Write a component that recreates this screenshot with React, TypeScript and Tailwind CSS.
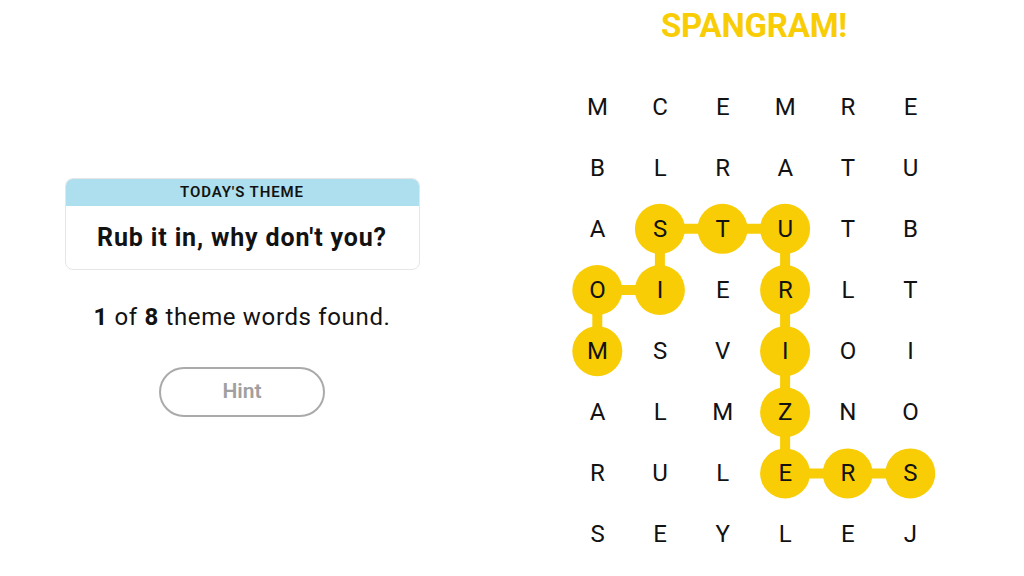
import React from 'react';

const letters = [
  ['M', 'C', 'E', 'M', 'R', 'E'],
  ['B', 'L', 'R', 'A', 'T', 'U'],
  ['A', 'S', 'T', 'U', 'T', 'B'],
  ['O', 'I', 'E', 'R', 'L', 'T'],
  ['M', 'S', 'V', 'I', 'O', 'I'],
  ['A', 'L', 'M', 'Z', 'N', 'O'],
  ['R', 'U', 'L', 'E', 'R', 'S'],
  ['S', 'E', 'Y', 'L', 'E', 'J'],
];

// spangram path as [row, col]
const path: [number, number][] = [
  [4, 0], [3, 0], [3, 1], [2, 1], [2, 2], [2, 3],
  [3, 3], [4, 3], [5, 3], [6, 3], [6, 4], [6, 5],
];

const CW = 62.6;
const RH = 61.14;
const YELLOW = '#f8cd05';

const cx = (c: number) => c * CW + CW / 2;
const cy = (r: number) => r * RH + RH / 2;

const App: React.FC = () => {
  return (
    <div className="w-[1024px] h-[576px] flex bg-white text-[#121212] font-['Roboto',sans-serif]">
      {/* Left panel */}
      <div className="w-[484px] flex flex-col items-center pt-[178px]">
        <div className="w-[355px] rounded-lg border border-[#e6e6e6] overflow-hidden">
          <div className="h-[27px] bg-[#aedfee] flex items-center justify-center text-[15px] font-semibold tracking-[0.9px]">
            TODAY&apos;S THEME
          </div>
          <div className="h-[63px] flex items-center justify-center text-[25px] font-bold tracking-[0.85px]">
            Rub it in, why don't you?
          </div>
        </div>
        <p className="mt-[33px] text-[24px] leading-[28px] tracking-[0.65px]">
          <span className="font-bold">1</span> of <span className="font-bold">8</span> theme words found.
        </p>
        <button className="mt-[36px] w-[166px] h-[50px] rounded-full border-2 border-[#aaaaaa] text-[#a0a0a0] text-[21px] font-semibold">
          Hint
        </button>
      </div>

      {/* Right panel */}
      <div className="flex-1 flex flex-col items-center">
        <div className="h-[52px] pt-[6px] text-[33px] leading-[40px] font-bold tracking-[-0.2px] text-[#f8cd05]">
          SPANGRAM!
        </div>
        <div className="relative mt-[24px] grid grid-cols-[repeat(6,62.6px)] grid-rows-[repeat(8,61.14px)]">
          <svg className="absolute inset-0" width={CW * 6} height={RH * 8}>
            {path.slice(1).map(([r, c], i) => {
              const [pr, pc] = path[i];
              return (
                <line
                  key={i}
                  x1={cx(pc)}
                  y1={cy(pr)}
                  x2={cx(c)}
                  y2={cy(r)}
                  stroke={YELLOW}
                  strokeWidth={10}
                />
              );
            })}
            {path.map(([r, c], i) => (
              <circle key={i} cx={cx(c)} cy={cy(r)} r={25} fill={YELLOW} />
            ))}
          </svg>
          {letters.map((row, r) =>
            row.map((l, c) => (
              <div key={`${r}-${c}`} className="relative flex items-center justify-center text-[24px]">
                {l}
              </div>
            ))
          )}
        </div>
      </div>
    </div>
  );
};

export default App;
